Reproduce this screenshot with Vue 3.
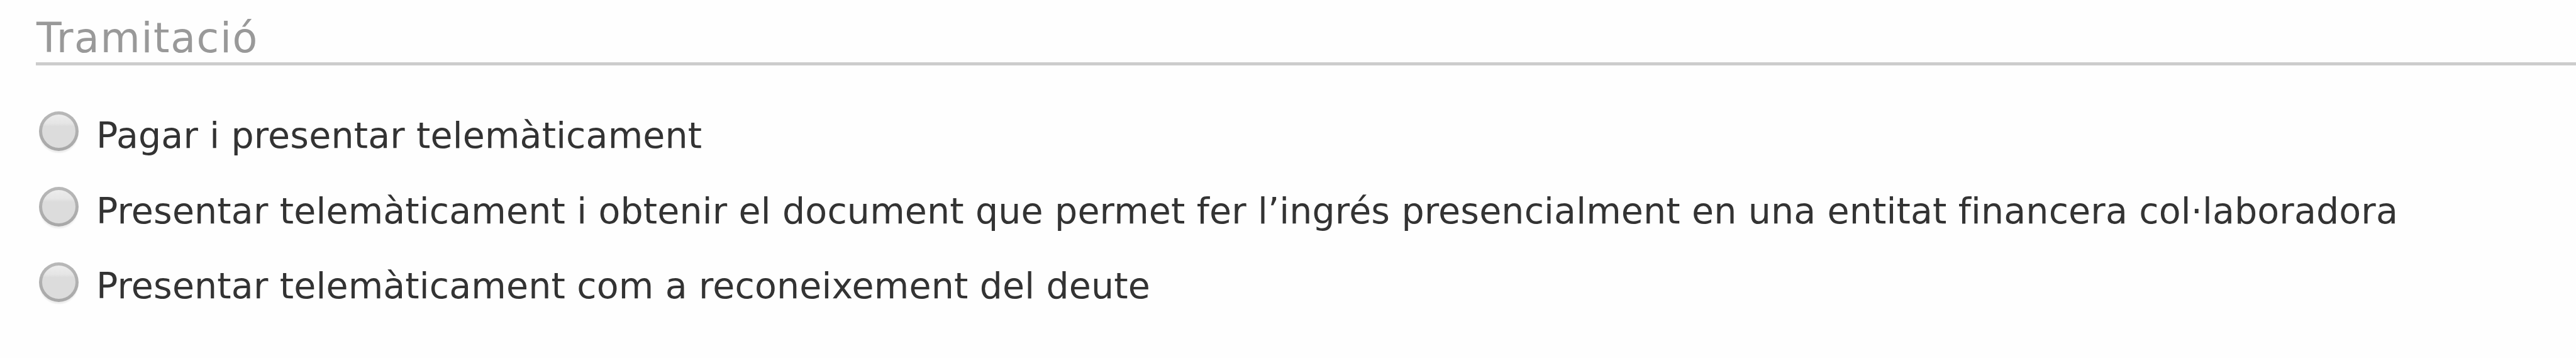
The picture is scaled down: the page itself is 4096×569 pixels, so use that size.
<template>
  <section class="tramitacio">
    <h2 class="title">Tramitació</h2>
    <div class="options">
      <label v-for="option in options" :key="option.id" class="option">
        <input v-model="selected" type="radio" name="tramitacio" :value="option.id" />
        <span>{{ option.label }}</span>
      </label>
    </div>
  </section>
</template>

<script setup>
import { ref } from 'vue'

const selected = ref('')

const options = [
  { id: 'pagar', label: 'Pagar i presentar telemàticament' },
  {
    id: 'document',
    label: 'Presentar telemàticament i obtenir el document que permet fer l’ingrés presencialment en una entitat financera col·laboradora',
  },
  { id: 'reconeixement', label: 'Presentar telemàticament com a reconeixement del deute' },
]
</script>

<style scoped>
.tramitacio {
  box-sizing: border-box;
  height: 569px;
  padding: 14px 0 0 57px;
  overflow: hidden;
  background: #fefefe;
  font-family: 'DejaVu Sans', Verdana, sans-serif;
  font-variant-ligatures: none;
}

.title {
  box-sizing: border-box;
  height: 90px;
  margin: 0;
  padding-left: 1px;
  border-bottom: 5px solid #ccc;
  color: #999;
  font-size: 65px;
  font-weight: 400;
  letter-spacing: 1.6px;
  line-height: 94px;
  white-space: nowrap;
}

.options {
  padding-top: 45px;
}

.option {
  display: flex;
  align-items: center;
  gap: 28px;
  height: 119.8px;
  padding-left: 5px;
  color: #333;
  font-size: 57px;
  letter-spacing: 0.14px;
  white-space: nowrap;
}

.option input {
  flex: none;
  width: 63px;
  height: 63px;
  margin: 0;
  appearance: none;
  border: 5px solid transparent;
  border-radius: 50%;
  background:
    linear-gradient(#ececec 0%, #e6e6e6 25%, #dcdcdc 36%, #dcdcdc 100%) padding-box,
    linear-gradient(#b8b8b8, #a8a8a8) border-box;
  box-shadow: 0 4px 2px -1px #ededed;
}

.option span {
  padding-top: 12px;
}
</style>
